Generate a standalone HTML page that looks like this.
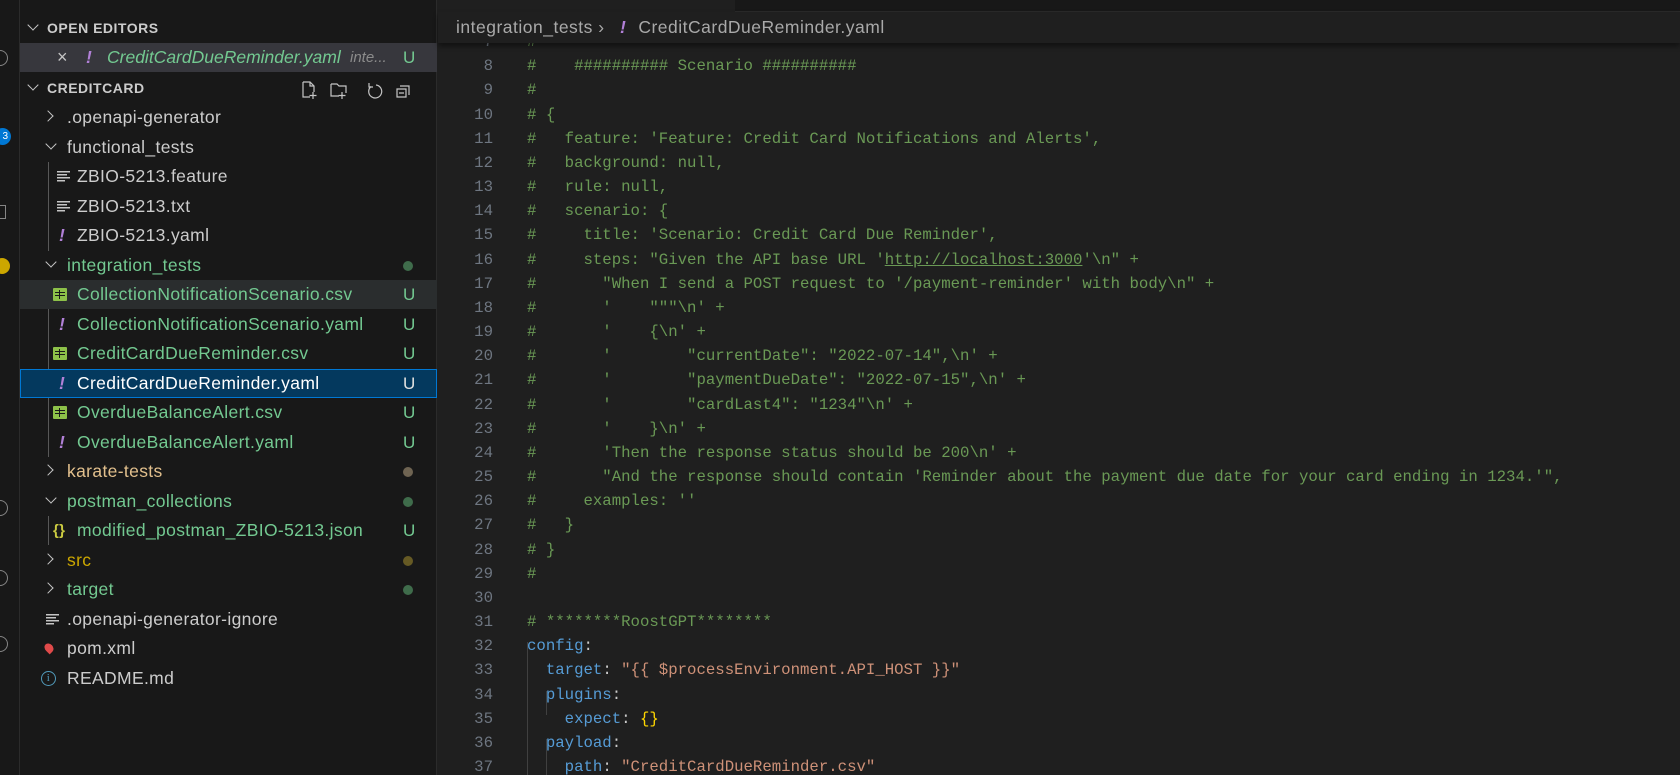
<!DOCTYPE html>
<html><head><meta charset="utf-8"><style>
*{margin:0;padding:0;box-sizing:border-box}
html{overflow:hidden}
body{width:1680px;height:775px;background:#1f1f1f;position:relative;overflow:hidden;font-family:"Liberation Sans",sans-serif}
#act{position:absolute;left:0;top:0;width:20px;height:775px;background:#181818;border-right:1px solid #2b2b2b;overflow:hidden}
#side{position:absolute;left:20px;top:0;width:417px;height:775px;background:#181818;border-right:1px solid #2b2b2b}
.r{position:absolute;left:0;width:417px;height:29px;line-height:29px;font-size:17.5px;color:#cccccc;white-space:nowrap;letter-spacing:.35px}
.h{font-size:14px;font-weight:bold;color:#cccccc;letter-spacing:.5px}
.g{color:#73c991}.t{color:#e2c08d}.y{color:#cca700}
.u{position:absolute;left:383px;top:0;font-size:17px}
.dot{position:absolute;left:383px;top:10px;width:10px;height:10px;border-radius:5px}
.ic{position:absolute;top:0}
.ex{color:#b180d7;font-style:italic;font-weight:bold}
.chev{position:absolute;top:9px;width:8px;height:8px;border-right:1.5px solid #c5c5c5;border-bottom:1.5px solid #c5c5c5}
.cd{transform:rotate(45deg);top:7px}
.cr{transform:rotate(-45deg)}
.csv{position:absolute;top:8px;width:14px;height:13px;background:#8dc149;border-radius:1px}
.csv:after{content:"";position:absolute;left:2px;top:2px;width:10px;height:9px;background:
linear-gradient(#181818,#181818) 0 2px/10px 1px no-repeat,linear-gradient(#181818,#181818) 0 5px/10px 1px no-repeat,linear-gradient(#181818,#181818) 4px 0/1px 9px no-repeat;background-color:#8dc149}
.lines{position:absolute;top:9px;width:13px;height:11px;background:linear-gradient(#c5c5c5,#c5c5c5) 0 0/13px 1.5px no-repeat,linear-gradient(#c5c5c5,#c5c5c5) 0 3px/10px 1.5px no-repeat,linear-gradient(#c5c5c5,#c5c5c5) 0 6px/13px 1.5px no-repeat,linear-gradient(#c5c5c5,#c5c5c5) 0 9px/8px 1.5px no-repeat}
#top{position:absolute;left:438px;top:0;right:0;height:12px;background:#1f1f1f}
#top2{position:absolute;left:735px;top:0;right:0;height:12px;background:#181818;border-bottom:1px solid #2b2b2b}
#bc{position:absolute;left:438px;top:12px;right:0;height:31px;background:#1f1f1f;box-shadow:0 3px 5px rgba(0,0,0,.45);z-index:2;font-size:17.5px;color:#a9a9a9;line-height:31px;padding-left:18px;letter-spacing:.5px}
#code{position:absolute;left:438px;top:30px;right:0;bottom:0;font-family:"Liberation Mono",monospace;font-size:15.7px}
.l{position:absolute;left:0;height:24.17px;line-height:24.17px;white-space:pre;width:1242px}
.n{position:absolute;left:0;width:55px;color:#6e7681;text-align:right}
.c{position:absolute;left:89px;color:#6a9955}
.k{color:#569cd6}.s{color:#ce9178}.p{color:#cccccc}.b{color:#ffd700}
.guide{position:absolute;width:1px;background:#404040}
</style></head><body>
<div id="act">
<div style="position:absolute;left:-6px;top:128px;width:17px;height:17px;border-radius:9px;background:#0078d4;color:#fff;font-size:10px;line-height:17px;text-align:right;padding-right:3px">3</div>
<div style="position:absolute;left:-6px;top:258px;width:16px;height:16px;border-radius:8px;background:#cca700"></div>
<div style="position:absolute;left:-8px;top:50px;width:16px;height:16px;border:1.5px solid #858585;border-radius:8px"></div>
<div style="position:absolute;left:-8px;top:205px;width:14px;height:14px;border:1.5px solid #858585"></div>
<div style="position:absolute;left:-8px;top:500px;width:16px;height:16px;border:1.5px solid #858585;border-radius:8px"></div>
<div style="position:absolute;left:-8px;top:570px;width:16px;height:16px;border:1.5px solid #858585;border-radius:8px"></div>
<div style="position:absolute;left:-8px;top:636px;width:16px;height:16px;border:1.5px solid #858585;border-radius:8px"></div>
</div>
<div id="side">
<div class="r h" style="top:14px"><span class="chev cd" style="left:9px"></span><span style="position:absolute;left:27px">OPEN EDITORS</span></div>
<div class="r" style="top:43px;background:#37373d"><span style="position:absolute;left:37px;color:#c5c5c5;font-size:18px">×</span><span class="ic ex" style="left:66px">!</span><span class="g" style="position:absolute;left:87px;font-style:italic;letter-spacing:0">CreditCardDueReminder.yaml</span><span style="position:absolute;left:330px;font-size:15px;color:#8b8b8b;font-style:italic;letter-spacing:0">inte...</span><span class="u g">U</span></div>
<div class="r h" style="top:74px"><span class="chev cd" style="left:9px"></span><span style="position:absolute;left:27px">CREDITCARD</span>
<svg style="position:absolute;left:280px;top:6px" width="120" height="20" fill="none" stroke="#c5c5c5" stroke-width="1.2"><path d="M3 2h7l4 4v6M3 2v15h7M10 2v4h4M13 12v7M9.5 15.5h7"/><path d="M31 4h6l2 2h7v7M31 4v12h8M42 12v7M38.5 15.5h7"/><path d="M76 5a6.5 6.5 0 1 1-5 1.5M69 3v4h4"/><path d="M100 6h9v9M97 9h9v8h-9zM99 13h5"/></svg></div>
<div style="position:absolute;left:28px;top:162px;width:1px;height:89px;background:#585858"></div>
<div style="position:absolute;left:28px;top:280px;width:1px;height:177px;background:#585858"></div>
<div style="position:absolute;left:28px;top:516px;width:1px;height:29px;background:#585858"></div>
<div class="r" style="top:103px"><span class="chev cr" style="left:24px"></span><span style="position:absolute;left:47px">.openapi-generator</span></div>
<div class="r" style="top:133px"><span class="chev cd" style="left:27px"></span><span style="position:absolute;left:47px">functional_tests</span></div>
<div class="r" style="top:162px"><span class="lines" style="left:37px"></span><span style="position:absolute;left:57px">ZBIO-5213.feature</span></div>
<div class="r" style="top:192px"><span class="lines" style="left:37px"></span><span style="position:absolute;left:57px">ZBIO-5213.txt</span></div>
<div class="r" style="top:221px"><span class="ic ex" style="left:39px">!</span><span style="position:absolute;left:57px">ZBIO-5213.yaml</span></div>
<div class="r" style="top:251px"><span class="chev cd" style="left:27px"></span><span class="g" style="position:absolute;left:47px">integration_tests</span><span class="dot" style="background:#3f6c4b;left:383px"></span></div>
<div class="r" style="top:280px;background:#2a2d2e"><span class="csv" style="left:33px"></span><span class="g" style="position:absolute;left:57px">CollectionNotificationScenario.csv</span><span class="u g">U</span></div>
<div class="r" style="top:310px"><span class="ic ex" style="left:39px">!</span><span class="g" style="position:absolute;left:57px">CollectionNotificationScenario.yaml</span><span class="u g">U</span></div>
<div class="r" style="top:339px"><span class="csv" style="left:33px"></span><span class="g" style="position:absolute;left:57px">CreditCardDueReminder.csv</span><span class="u g">U</span></div>
<div class="r" style="top:369px;background:#04395e;border:1px solid #0078d4;line-height:27px"><span class="ic ex" style="left:38px">!</span><span style="position:absolute;left:56px;color:#fff">CreditCardDueReminder.yaml</span><span class="u" style="left:382px;color:#e0e0e0">U</span></div>
<div class="r" style="top:398px"><span class="csv" style="left:33px"></span><span class="g" style="position:absolute;left:57px">OverdueBalanceAlert.csv</span><span class="u g">U</span></div>
<div class="r" style="top:428px"><span class="ic ex" style="left:39px">!</span><span class="g" style="position:absolute;left:57px">OverdueBalanceAlert.yaml</span><span class="u g">U</span></div>
<div class="r" style="top:457px"><span class="chev cr" style="left:24px"></span><span class="t" style="position:absolute;left:47px">karate-tests</span><span class="dot" style="background:#6f6452"></span></div>
<div class="r" style="top:487px"><span class="chev cd" style="left:27px"></span><span class="g" style="position:absolute;left:47px">postman_collections</span><span class="dot" style="background:#3f6c4b"></span></div>
<div class="r" style="top:516px"><span class="ic" style="left:33px;color:#cbcb41;font-weight:bold;font-size:15px">{}</span><span class="g" style="position:absolute;left:57px">modified_postman_ZBIO-5213.json</span><span class="u g">U</span></div>
<div class="r" style="top:546px"><span class="chev cr" style="left:24px"></span><span class="y" style="position:absolute;left:47px">src</span><span class="dot" style="background:#665a24"></span></div>
<div class="r" style="top:575px"><span class="chev cr" style="left:24px"></span><span class="g" style="position:absolute;left:47px">target</span><span class="dot" style="background:#3f6c4b"></span></div>
<div class="r" style="top:605px"><span class="lines" style="left:26px"></span><span style="position:absolute;left:47px">.openapi-generator-ignore</span></div>
<div class="r" style="top:634px"><span class="ic" style="left:25px;top:9px;width:8px;height:10px;background:#e04a4a;border-radius:50% 50% 50% 0;transform:rotate(-45deg)"></span><span style="position:absolute;left:47px">pom.xml</span></div>
<div class="r" style="top:664px"><span class="ic" style="left:21px;top:7px;width:15px;height:15px;border:1.3px solid #519aba;border-radius:8px;color:#519aba;font-size:11px;line-height:13px;text-align:center;font-family:'Liberation Serif',serif">i</span><span style="position:absolute;left:47px">README.md</span></div>
</div>
<div id="top"></div><div id="top2"></div>
<div id="bc">integration_tests <span style="color:#a9a9a9">›</span> <span style="color:#b180d7;font-weight:bold;font-style:italic;margin:0 12px 0 10px">!</span>CreditCardDueReminder.yaml</div>
<div id="code">
<div class="guide" style="left:89px;top:612px;height:133px"></div>
<div class="guide" style="left:108px;top:661px;height:24px"></div>
<div class="guide" style="left:108px;top:709px;height:36px"></div>
<div class="l" style="top:0px"><span class="n">7</span><span class="c">#</span></div>
<div class="l" style="top:24.17px"><span class="n">8</span><span class="c">#    ########## Scenario ##########</span></div>
<div class="l" style="top:48.34px"><span class="n">9</span><span class="c">#</span></div>
<div class="l" style="top:72.51px"><span class="n">10</span><span class="c"># {</span></div>
<div class="l" style="top:96.68px"><span class="n">11</span><span class="c">#   feature: 'Feature: Credit Card Notifications and Alerts',</span></div>
<div class="l" style="top:120.85px"><span class="n">12</span><span class="c">#   background: null,</span></div>
<div class="l" style="top:145.02px"><span class="n">13</span><span class="c">#   rule: null,</span></div>
<div class="l" style="top:169.19px"><span class="n">14</span><span class="c">#   scenario: {</span></div>
<div class="l" style="top:193.36px"><span class="n">15</span><span class="c">#     title: 'Scenario: Credit Card Due Reminder',</span></div>
<div class="l" style="top:217.53px"><span class="n">16</span><span class="c">#     steps: "Given the API base URL '<u>http://localhost:3000</u>'\n" +</span></div>
<div class="l" style="top:241.7px"><span class="n">17</span><span class="c">#       "When I send a POST request to '/payment-reminder' with body\n" +</span></div>
<div class="l" style="top:265.87px"><span class="n">18</span><span class="c">#       '    """\n' +</span></div>
<div class="l" style="top:290.04px"><span class="n">19</span><span class="c">#       '    {\n' +</span></div>
<div class="l" style="top:314.21px"><span class="n">20</span><span class="c">#       '        "currentDate": "2022-07-14",\n' +</span></div>
<div class="l" style="top:338.38px"><span class="n">21</span><span class="c">#       '        "paymentDueDate": "2022-07-15",\n' +</span></div>
<div class="l" style="top:362.55px"><span class="n">22</span><span class="c">#       '        "cardLast4": "1234"\n' +</span></div>
<div class="l" style="top:386.72px"><span class="n">23</span><span class="c">#       '    }\n' +</span></div>
<div class="l" style="top:410.89px"><span class="n">24</span><span class="c">#       'Then the response status should be 200\n' +</span></div>
<div class="l" style="top:435.06px"><span class="n">25</span><span class="c">#       "And the response should contain 'Reminder about the payment due date for your card ending in 1234.'",</span></div>
<div class="l" style="top:459.23px"><span class="n">26</span><span class="c">#     examples: ''</span></div>
<div class="l" style="top:483.4px"><span class="n">27</span><span class="c">#   }</span></div>
<div class="l" style="top:507.57px"><span class="n">28</span><span class="c"># }</span></div>
<div class="l" style="top:531.74px"><span class="n">29</span><span class="c">#</span></div>
<div class="l" style="top:555.91px"><span class="n">30</span></div>
<div class="l" style="top:580.08px"><span class="n">31</span><span class="c"># ********RoostGPT********</span></div>
<div class="l" style="top:604.25px"><span class="n">32</span><span class="c"><span class="k">config</span><span class="p">:</span></span></div>
<div class="l" style="top:628.42px"><span class="n">33</span><span class="c">  <span class="k">target</span><span class="p">: </span><span class="s">"{{ $processEnvironment.API_HOST }}"</span></span></div>
<div class="l" style="top:652.59px"><span class="n">34</span><span class="c">  <span class="k">plugins</span><span class="p">:</span></span></div>
<div class="l" style="top:676.76px"><span class="n">35</span><span class="c">    <span class="k">expect</span><span class="p">: </span><span class="b">{}</span></span></div>
<div class="l" style="top:700.93px"><span class="n">36</span><span class="c">  <span class="k">payload</span><span class="p">:</span></span></div>
<div class="l" style="top:725.1px"><span class="n">37</span><span class="c">    <span class="k">path</span><span class="p">: </span><span class="s">"CreditCardDueReminder.csv"</span></span></div>
</div>
</body></html>
